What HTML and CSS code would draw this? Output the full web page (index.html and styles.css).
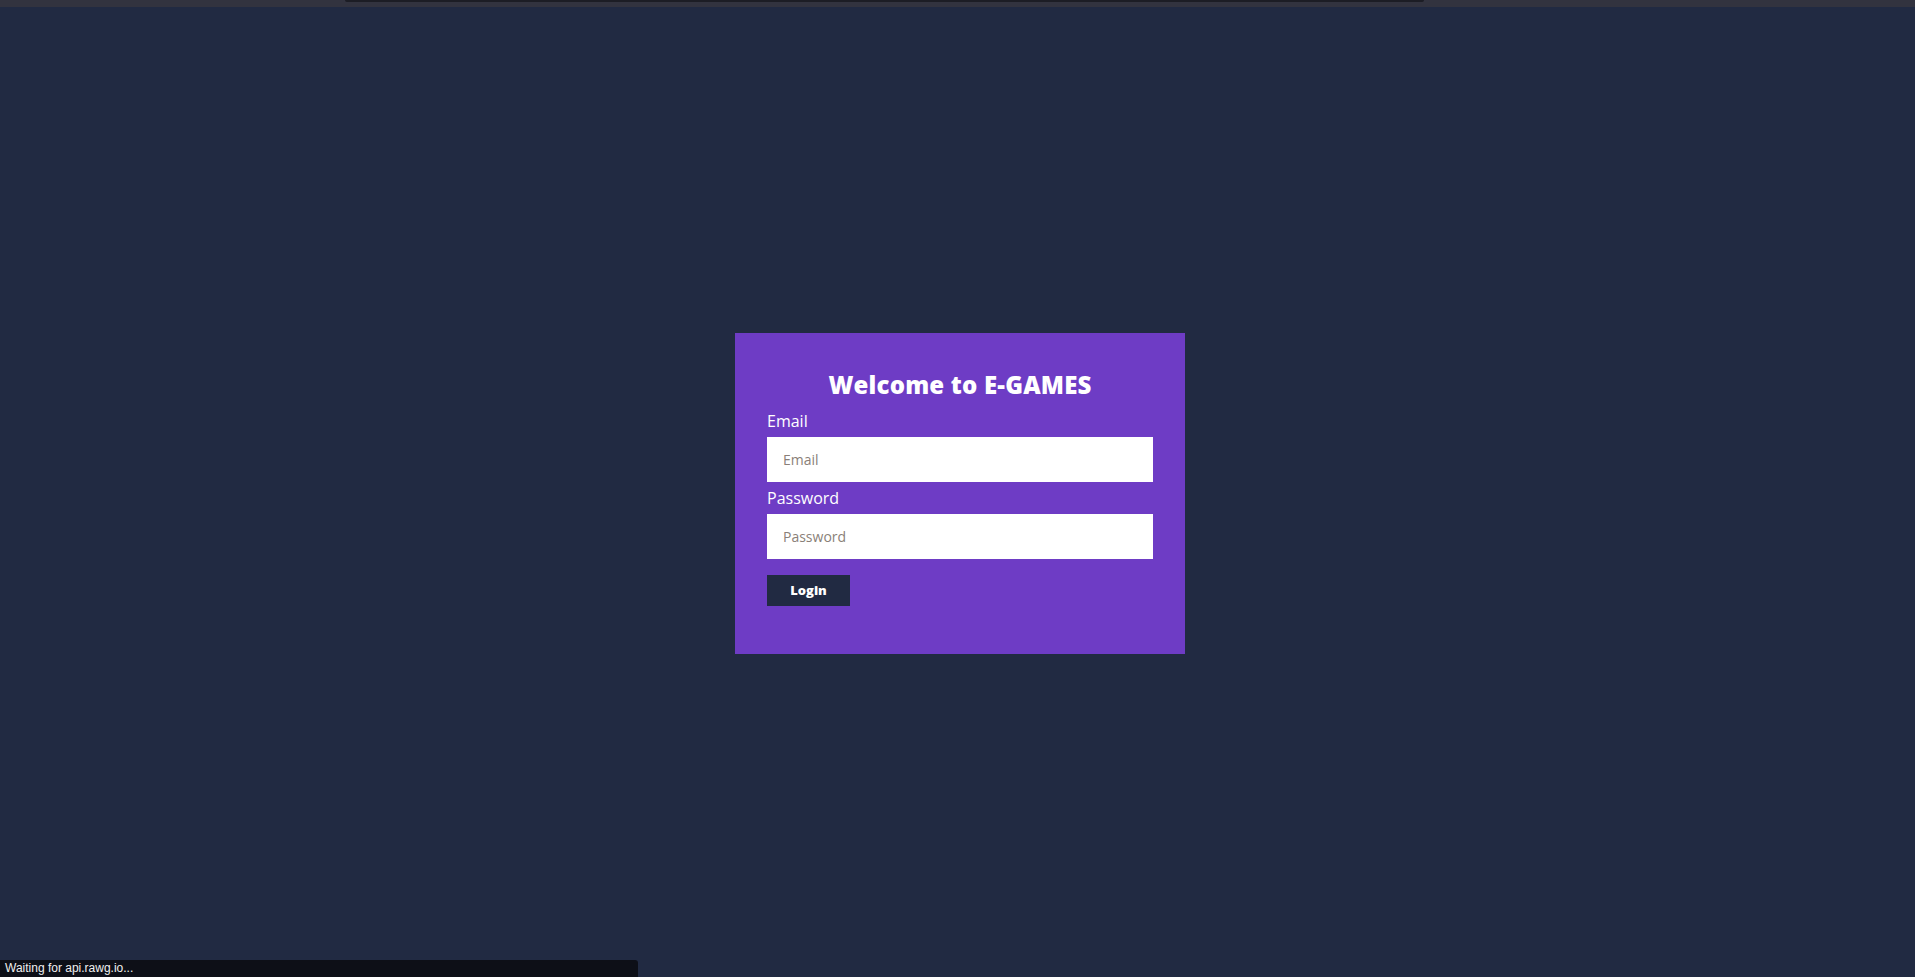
FILE: index.html
```html
<!DOCTYPE html>
<html lang="en">
<head>
<meta charset="utf-8">
<title>E-GAMES</title>
<link rel="stylesheet" href="styles.css">
</head>
<body>
<div class="topstrip"><div class="topbar"></div></div>
<main class="stage">
  <form class="card">
    <h1 class="title">Welcome to E-GAMES</h1>
    <label class="label" for="email">Email</label>
    <input class="field" id="email" type="email" placeholder="Email">
    <label class="label" for="password">Password</label>
    <input class="field" id="password" type="password" placeholder="Password">
    <button class="btn" type="button">Login</button>
  </form>
</main>
<div class="status">Waiting for api.rawg.io...</div>
</body>
</html>
```
FILE: styles.css
```css
* { box-sizing: border-box; }
html, body { margin: 0; height: 100%; }
body {
  background: #212a42;
  font-family: "Open Sans", "Liberation Sans", sans-serif;
  display: flex;
  flex-direction: column;
  overflow: hidden;
}
.topstrip {
  height: 7px;
  background: #32333f;
  display: flex;
  justify-content: flex-start;
  padding-left: 345px;
  flex: none;
}
.topbar {
  width: 1079px;
  height: 2px;
  background: #1c1d25;
  border-radius: 0 0 3px 3px;
}
.stage {
  flex: 1;
  display: flex;
  align-items: center;
  justify-content: center;
  padding-left: 5px;
}
.card {
  width: 450px;
  background: #6e3cc5;
  padding: 35px 32px 48px;
  display: flex;
  flex-direction: column;
  margin-top: 2px;
}
.title {
  margin: 0 0 8px;
  text-align: center;
  color: #fff;
  font-size: 24px;
  font-weight: 800;
  line-height: 34px;
  letter-spacing: 0.2px;
}
.label {
  color: #fff;
  font-size: 16px;
  line-height: 22px;
  margin-bottom: 5px;
}
.field {
  height: 45px;
  border: 0;
  outline: none;
  background: #fff;
  padding: 0 16px;
  font-family: inherit;
  font-size: 14px;
  margin-bottom: 5px;
}
.field::placeholder { color: #8a7f78; }
.btn {
  margin-top: 11px;
  align-self: flex-start;
  width: 83px;
  height: 31px;
  border: 0;
  background: #212a42;
  color: #fff;
  font-family: inherit;
  font-weight: 800;
  font-size: 13px;
}
.status {
  position: fixed;
  left: 0;
  bottom: 0;
  width: 638px;
  height: 17px;
  background: #0d0f17;
  color: #f0f0f0;
  font-family: "Liberation Sans", sans-serif;
  font-size: 12px;
  line-height: 17px;
  padding-left: 5px;
  border-top-right-radius: 3px;
}
```
